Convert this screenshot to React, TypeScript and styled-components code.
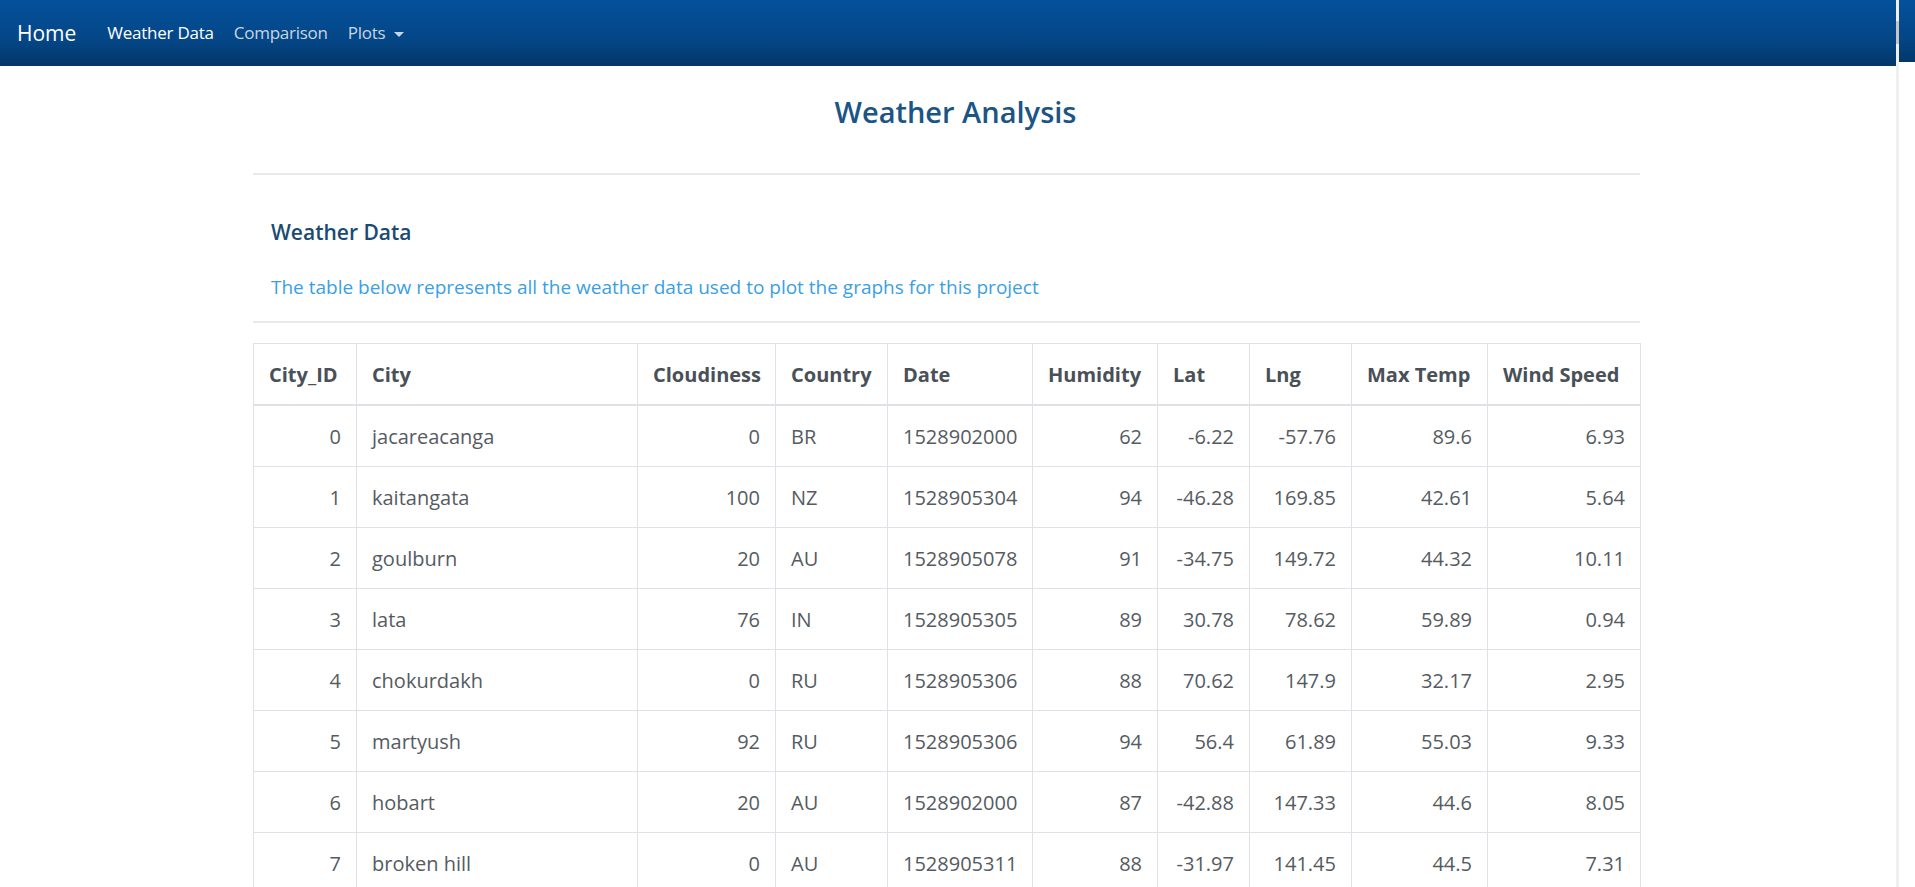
import React from "react";
import styled, { createGlobalStyle } from "styled-components";

const Global = createGlobalStyle`
  html, body { margin: 0; padding: 0; background: #fff; }
  body {
    font-family: "Open Sans", "Noto Sans", Arial, sans-serif;
    font-size: 20px;
    color: #495057;
    overflow: hidden;
  }
  * { box-sizing: border-box; }
`;

const Shell = styled.div`
  display: flex;
  align-items: flex-start;
  width: 1915px;
  height: 887px;
  overflow: hidden;
`;

const Main = styled.div`
  width: 1896px;
  flex: none;
`;

const ScrollTrack = styled.div`
  width: 3px;
  height: 887px;
  flex: none;
  background: #f0f0f0;
  display: flex;
  flex-direction: column;
  padding-top: 21px;
`;

const ScrollThumb = styled.div`
  width: 3px;
  height: 23px;
  background: #c6c6c6;
`;

const NavStub = styled.div`
  width: 16px;
  height: 62px;
  flex: none;
  background: linear-gradient(#04519b, #044687 60%, #033769);
`;

const Navbar = styled.nav`
  height: 66px;
  display: flex;
  align-items: center;
  padding: 0 0 0 17px;
  background: linear-gradient(#04519b, #044687 60%, #033769);
`;

const Brand = styled.a`
  font-size: 21px;
  color: #fff;
  margin-right: 21px;
  line-height: 30px;
`;

const NavLink = styled.a<{ $active?: boolean }>`
  font-size: 17px;
  letter-spacing: -0.25px;
  line-height: 30px;
  padding: 0 10px;
  color: ${(p) => (p.$active ? "#fff" : "rgba(255,255,255,0.78)")};
  display: flex;
  align-items: center;
  gap: 9px;
`;

const Caret = styled.span`
  width: 0;
  height: 0;
  border-left: 5px solid transparent;
  border-right: 5px solid transparent;
  border-top: 5px solid rgba(255,255,255,0.78);
  margin-top: 2px;
`;

const TitleBar = styled.div`
  text-align: center;
  padding: 22px 0 0 15px;
  height: 107px;
`;

const Title = styled.h1`
  margin: 0;
  font-size: 29px;
  font-weight: 600;
  line-height: 48px;
  color: #1b5585;
`;

const Container = styled.div`
  margin-left: 253px;
  width: 1387px;
`;

const Rule = styled.hr`
  margin: 0;
  border: 0;
  border-top: 2px solid #e9e9e9;
`;

const Intro = styled.section`
  padding: 42px 0 0 18px;
  height: 146px;
`;

const SectionTitle = styled.h2`
  margin: 0;
  font-size: 21px;
  font-weight: 600;
  line-height: 30px;
  color: #1b4b72;
`;

const Lead = styled.p`
  margin: 25px 0 0;
  font-size: 19px;
  line-height: 30px;
  color: #3a9fe4;
`;

const Table = styled.table`
  margin-top: 20px;
  width: 1387px;
  border-collapse: collapse;
  table-layout: fixed;
  border: 1px solid #dee2e6;
`;

const Col = styled.col<{ $w: number }>`
  width: ${(p) => p.$w}px;
`;

const Th = styled.th`
  text-align: left;
  font-weight: 700;
  color: #495057;
  padding: 16px 15px 14px;
  line-height: 30px;
  height: 61px;
  border: 1px solid #dee2e6;
  border-bottom: 2px solid #dee2e6;
  white-space: nowrap;
`;

const Td = styled.td<{ $num?: boolean }>`
  text-align: ${(p) => (p.$num ? "right" : "left")};
  padding: 16px 15px 14px;
  line-height: 30px;
  height: 61px;
  border: 1px solid #dee2e6;
  color: #555b61;
  white-space: nowrap;
`;

const widths = [103, 281, 138, 112, 145, 125, 92, 102, 136, 153];
const headers = ["City_ID", "City", "Cloudiness", "Country", "Date", "Humidity", "Lat", "Lng", "Max Temp", "Wind Speed"];
const numeric = [true, false, true, false, true, true, true, true, true, true];

const rows: (string | number)[][] = [
  [0, "jacareacanga", 0, "BR", 1528902000, 62, -6.22, -57.76, 89.6, 6.93],
  [1, "kaitangata", 100, "NZ", 1528905304, 94, -46.28, 169.85, 42.61, 5.64],
  [2, "goulburn", 20, "AU", 1528905078, 91, -34.75, 149.72, 44.32, 10.11],
  [3, "lata", 76, "IN", 1528905305, 89, 30.78, 78.62, 59.89, 0.94],
  [4, "chokurdakh", 0, "RU", 1528905306, 88, 70.62, 147.9, 32.17, 2.95],
  [5, "martyush", 92, "RU", 1528905306, 94, 56.4, 61.89, 55.03, 9.33],
  [6, "hobart", 20, "AU", 1528902000, 87, -42.88, 147.33, 44.6, 8.05],
  [7, "broken hill", 0, "AU", 1528905311, 88, -31.97, 141.45, 44.5, 7.31],
  [8, "ushuaia", 75, "AR", 1528902000, 80, -54.81, -68.31, 33.8, 9.17],
];

export default function App() {
  return (
    <>
      <Global />
      <Shell>
        <Main>
          <Navbar>
            <Brand>Home</Brand>
            <NavLink $active>Weather Data</NavLink>
            <NavLink>Comparison</NavLink>
            <NavLink>
              Plots <Caret />
            </NavLink>
          </Navbar>
          <TitleBar>
            <Title>Weather Analysis</Title>
          </TitleBar>
          <Container>
            <Rule />
            <Intro>
              <SectionTitle>Weather Data</SectionTitle>
              <Lead>The table below represents all the weather data used to plot the graphs for this project</Lead>
            </Intro>
            <Rule />
            <Table>
              <colgroup>
                {widths.map((w, i) => (
                  <Col key={i} $w={w} />
                ))}
              </colgroup>
              <thead>
                <tr>
                  {headers.map((h) => (
                    <Th key={h}>{h}</Th>
                  ))}
                </tr>
              </thead>
              <tbody>
                {rows.map((r) => (
                  <tr key={r[0]}>
                    {r.map((c, i) => (
                      <Td key={i} $num={numeric[i]}>
                        {c}
                      </Td>
                    ))}
                  </tr>
                ))}
              </tbody>
            </Table>
          </Container>
        </Main>
        <ScrollTrack>
          <ScrollThumb />
        </ScrollTrack>
        <NavStub />
      </Shell>
    </>
  );
}
